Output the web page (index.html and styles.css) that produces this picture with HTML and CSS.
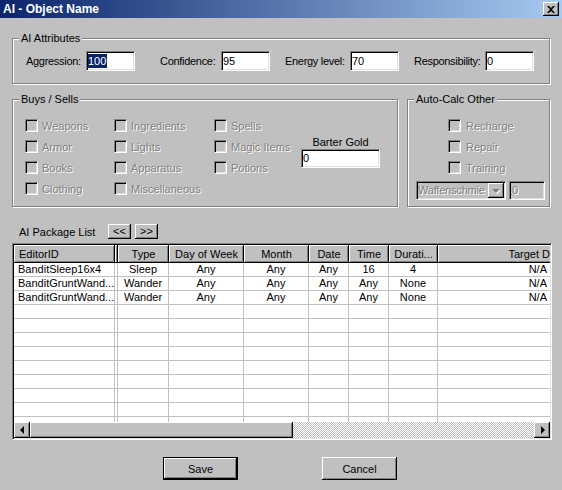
FILE: index.html
```html
<!DOCTYPE html>
<html lang="en">
<head>
  <meta charset="UTF-8" />
  <title>AI - Object Name</title>
  <link rel="stylesheet" href="styles.css">
</head>
<body>
  <div class="window">
    <div class="titlebar">
      <span class="title">AI - Object Name</span>
      <button class="close-btn">
        <svg width="8" height="7" viewBox="0 0 8 7"><path d="M0 0h2l2 2 2-2h2L5 3.5 8 7H6L4 5 2 7H0l3-3.5z" fill="#000"/></svg>
      </button>
    </div>

    <div class="content">
      <fieldset class="group attrs">
        <legend>AI Attributes</legend>
        <div class="attr-row">
          <span class="attr-label aggr">Aggression:</span>
          <div class="edit"><span class="sel">100</span></div>
          <span class="attr-label conf">Confidence:</span>
          <div class="edit">95</div>
          <span class="attr-label energy">Energy level:</span>
          <div class="edit">70</div>
          <span class="attr-label resp">Responsibility:</span>
          <div class="edit">0</div>
        </div>
      </fieldset>

      <div class="mid-row">
        <fieldset class="group buys">
          <legend>Buys / Sells</legend>
          <div class="checks">
            <div class="barter">
              <span class="barter-label">Barter Gold</span>
              <div class="edit barter-edit">0</div>
            </div>
            <div class="check"><span class="box"></span><span class="dis">Weapons</span></div>
            <div class="check"><span class="box"></span><span class="dis">Armor</span></div>
            <div class="check"><span class="box"></span><span class="dis">Books</span></div>
            <div class="check"><span class="box"></span><span class="dis">Clothing</span></div>
            <div class="check"><span class="box"></span><span class="dis">Ingredients</span></div>
            <div class="check"><span class="box"></span><span class="dis">Lights</span></div>
            <div class="check"><span class="box"></span><span class="dis">Apparatus</span></div>
            <div class="check"><span class="box"></span><span class="dis">Miscellaneous</span></div>
            <div class="check"><span class="box"></span><span class="dis">Spells</span></div>
            <div class="check"><span class="box"></span><span class="dis">Magic Items</span></div>
            <div class="check"><span class="box"></span><span class="dis">Potions</span></div>
          </div>
        </fieldset>

        <fieldset class="group auto">
          <legend>Auto-Calc Other</legend>
          <div class="auto-checks">
            <div class="check"><span class="box"></span><span class="dis">Recharge</span></div>
            <div class="check"><span class="box"></span><span class="dis">Repair</span></div>
            <div class="check"><span class="box"></span><span class="dis">Training</span></div>
          </div>
          <div class="combo-row">
            <div class="combo">
              <span class="combo-text dis">Waffenschmie</span>
              <span class="combo-btn"><span class="down-arrow"></span></span>
            </div>
            <div class="edit disabled-edit"><span class="dis">0</span></div>
          </div>
        </fieldset>
      </div>

      <div class="pkg-row">
        <span class="pkg-label">AI Package List</span>
        <button class="small-btn">&lt;&lt;</button>
        <button class="small-btn">&gt;&gt;</button>
      </div>

      <div class="list">
        <div class="list-body">
          <table class="grid">
            <thead>
              <tr>
                <th class="c-id">EditorID</th>
                <th class="c-gap"></th>
                <th class="c-type">Type</th>
                <th class="c-day">Day of Week</th>
                <th class="c-month">Month</th>
                <th class="c-date">Date</th>
                <th class="c-time">Time</th>
                <th class="c-dur">Durati...</th>
                <th class="c-target">Target D</th>
              </tr>
            </thead>
            <tbody>
              <tr><td class="c-id">BanditSleep16x4</td><td></td><td>Sleep</td><td>Any</td><td>Any</td><td>Any</td><td>16</td><td>4</td><td class="c-target">N/A</td></tr>
              <tr><td class="c-id">BanditGruntWand...</td><td></td><td>Wander</td><td>Any</td><td>Any</td><td>Any</td><td>Any</td><td>None</td><td class="c-target">N/A</td></tr>
              <tr><td class="c-id">BanditGruntWand...</td><td></td><td>Wander</td><td>Any</td><td>Any</td><td>Any</td><td>Any</td><td>None</td><td class="c-target">N/A</td></tr>
              <tr><td></td><td></td><td></td><td></td><td></td><td></td><td></td><td></td><td></td></tr>
              <tr><td></td><td></td><td></td><td></td><td></td><td></td><td></td><td></td><td></td></tr>
              <tr><td></td><td></td><td></td><td></td><td></td><td></td><td></td><td></td><td></td></tr>
              <tr><td></td><td></td><td></td><td></td><td></td><td></td><td></td><td></td><td></td></tr>
              <tr><td></td><td></td><td></td><td></td><td></td><td></td><td></td><td></td><td></td></tr>
              <tr><td></td><td></td><td></td><td></td><td></td><td></td><td></td><td></td><td></td></tr>
              <tr><td></td><td></td><td></td><td></td><td></td><td></td><td></td><td></td><td></td></tr>
              <tr><td></td><td></td><td></td><td></td><td></td><td></td><td></td><td></td><td></td></tr>
              <tr><td></td><td></td><td></td><td></td><td></td><td></td><td></td><td></td><td></td></tr>
            </tbody>
          </table>
        </div>
        <div class="hscroll">
          <span class="sb-btn"><span class="left-arrow"></span></span>
          <span class="sb-thumb"></span>
          <span class="sb-track"></span>
          <span class="sb-btn"><span class="right-arrow"></span></span>
        </div>
      </div>

      <div class="actions">
        <button class="btn default">Save</button>
        <button class="btn cancel">Cancel</button>
      </div>
    </div>
  </div>
</body>
</html>
```

FILE: styles.css
```css
body {
  margin: 0;
  background: #c0c0c0;
  font-family: "Liberation Sans", Arial, sans-serif;
  font-size: 11px;
  color: #000;
}
.window {
  width: 562px;
  height: 490px;
  overflow: hidden;
}
.titlebar {
  height: 18px;
  display: flex;
  align-items: center;
  justify-content: space-between;
  padding: 0 3px;
  background: linear-gradient(to right, #0a246a, #a6caf0);
}
.title {
  color: #fff;
  font-weight: bold;
  font-size: 12px;
}
.close-btn {
  width: 16px;
  height: 14px;
  padding: 0;
  border: none;
  background: #c0c0c0;
  box-shadow: inset -1px -1px #000, inset 1px 1px #fff, inset -2px -2px #808080;
  display: flex;
  align-items: center;
  justify-content: center;
}
.content {
  padding: 0 12px;
}

/* group boxes */
.group {
  margin: 0;
  padding: 0;
  min-width: 0;
  border: 1px solid #808080;
  box-shadow: inset 1px 1px #fff, 1px 1px #fff;
}
.group legend {
  margin-left: 6px;
  padding: 0 2px;
  line-height: 13px;
  background: #c0c0c0;
}
.attrs {
  margin-top: 14px;
}
.attr-row {
  display: flex;
  align-items: center;
  padding: 6px 0 12px 13px;
  letter-spacing: -0.3px;
}
.attr-label.aggr { width: 60px; }
.attr-label.conf { width: 61px; margin-left: 25px; }
.attr-label.energy { width: 65px; margin-left: 15px; }
.attr-label.resp { width: 71px; margin-left: 15px; }

.edit {
  box-sizing: border-box;
  width: 49px;
  height: 20px;
  padding-left: 1px;
  line-height: 18px;
  background: #fff;
  border: 1px solid;
  border-color: #808080 #fff #fff #808080;
  box-shadow: inset 1px 1px #000, inset -1px -1px #dfdfdf;
  white-space: nowrap;
  overflow: hidden;
  letter-spacing: 0;
}
.sel {
  display: inline-block;
  line-height: 14px;
  padding-right: 1px;
  background: #0a246a;
  color: #fff;
}

.mid-row {
  display: flex;
  gap: 9px;
  margin-top: 9px;
}
.buys {
  width: 386px;
  box-sizing: border-box;
}
.auto {
  flex: 1;
}
.checks {
  display: grid;
  grid-template-columns: 89px 100px 87px 79px;
  grid-template-rows: repeat(4, 21px);
  grid-auto-flow: column;
  padding: 9px 0 7px 12px;
}
.check {
  display: flex;
  align-items: center;
  gap: 4px;
}
.box {
  box-sizing: border-box;
  width: 13px;
  height: 13px;
  background: #c0c0c0;
  border: 1px solid;
  border-color: #808080 #fff #fff #808080;
  box-shadow: inset 1px 1px #000, inset -1px -1px #dfdfdf;
}
.dis {
  color: #808080;
  text-shadow: 1px 1px 0 #fff;
}
.barter {
  grid-column: 4;
  grid-row: 2 / span 2;
  display: flex;
  flex-direction: column;
}
.barter-label {
  text-align: center;
  line-height: 13px;
}
.edit.barter-edit {
  width: 79px;
  height: 19px;
  line-height: 17px;
}
.auto-checks {
  padding: 9px 0 0 40px;
}
.auto-checks .check {
  height: 21px;
  gap: 5px;
}
.combo-row {
  display: flex;
  margin: 3px 0 0 8px;
}
.combo {
  box-sizing: border-box;
  display: flex;
  width: 90px;
  height: 19px;
  padding: 1px;
  background: #c0c0c0;
  border: 1px solid;
  border-color: #808080 #fff #fff #808080;
  box-shadow: inset 1px 1px #000, inset -1px -1px #dfdfdf;
}
.combo-text {
  flex: 1;
  overflow: hidden;
  white-space: nowrap;
  line-height: 15px;
  letter-spacing: -0.2px;
}
.combo-btn {
  flex: none;
  width: 16px;
  height: 15px;
  background: #c0c0c0;
  box-shadow: inset -1px -1px #000, inset 1px 1px #fff, inset -2px -2px #808080;
  display: flex;
  align-items: center;
  justify-content: center;
}
.down-arrow {
  border-left: 4px solid transparent;
  border-right: 4px solid transparent;
  border-top: 4px solid #808080;
  filter: drop-shadow(1px 1px 0 #fff);
}
.edit.disabled-edit {
  width: 36px;
  height: 19px;
  line-height: 17px;
  margin-left: 3px;
  background: #c0c0c0;
  padding-left: 2px;
}

/* package list */
.pkg-row {
  display: flex;
  align-items: center;
  margin-top: 17px;
  padding-left: 7px;
}
.pkg-label {
  width: 89px;
}
.small-btn {
  width: 23px;
  height: 15px;
  padding: 0;
  margin-right: 4px;
  border: none;
  background: #c0c0c0;
  font: inherit;
  line-height: 13px;
  box-shadow: inset -1px -1px #000, inset 1px 1px #fff, inset -2px -2px #808080;
}
.list {
  box-sizing: border-box;
  width: 540px;
  height: 197px;
  margin-top: 4px;
  padding: 1px;
  display: flex;
  flex-direction: column;
  background: #fff;
  border: 1px solid;
  border-color: #808080 #fff #fff #808080;
  box-shadow: inset 1px 1px #000, inset -1px -1px #dfdfdf;
}
.list-body {
  flex: 1;
  overflow: hidden;
}
.grid {
  table-layout: fixed;
  border-collapse: separate;
  border-spacing: 0;
  width: 540px;
}
.grid th,
.grid td {
  box-sizing: border-box;
  padding: 0 2px;
  white-space: nowrap;
  overflow: hidden;
  text-align: center;
}
.grid th {
  height: 18px;
  font-weight: normal;
  background: #c0c0c0;
  box-shadow: inset -1px -1px #000, inset 1px 1px #fff, inset -2px -2px #808080;
}
.grid td {
  height: 14px;
  line-height: 13px;
  border-right: 1px solid #c0c0c0;
  border-bottom: 1px solid #c0c0c0;
}
.grid .c-id { width: 101px; text-align: left; padding-left: 4px; }
.grid th.c-id { padding-left: 5px; }
.grid .c-gap { width: 3px; padding: 0; }
.grid .c-type { width: 51px; }
.grid .c-day { width: 75px; }
.grid .c-month { width: 65px; }
.grid .c-date { width: 40px; }
.grid .c-time { width: 40px; }
.grid .c-dur { width: 49px; }
.grid .c-target { width: 116px; text-align: right; padding-right: 6px; }
.grid th.c-target { padding-right: 4px; }

.hscroll {
  flex: none;
  display: flex;
  height: 16px;
}
.sb-btn {
  width: 16px;
  height: 16px;
  background: #c0c0c0;
  box-shadow: inset -1px -1px #000, inset 1px 1px #fff, inset -2px -2px #808080;
  display: flex;
  align-items: center;
  justify-content: center;
}
.sb-thumb {
  width: 263px;
  background: #c0c0c0;
  box-shadow: inset -1px -1px #000, inset 1px 1px #fff, inset -2px -2px #808080;
}
.sb-track {
  flex: 1;
  background: repeating-conic-gradient(#fff 0 25%, #c0c0c0 0 50%) 0 0 / 2px 2px;
}
.left-arrow {
  border-top: 4px solid transparent;
  border-bottom: 4px solid transparent;
  border-right: 4px solid #000;
  margin-right: 1px;
}
.right-arrow {
  border-top: 4px solid transparent;
  border-bottom: 4px solid transparent;
  border-left: 4px solid #000;
  margin-left: 1px;
}

/* dialog buttons */
.actions {
  display: flex;
  margin-top: 17px;
  padding-left: 151px;
}
.btn {
  box-sizing: border-box;
  width: 75px;
  height: 23px;
  padding: 0;
  border: none;
  background: #c0c0c0;
  font: inherit;
  box-shadow: inset -1px -1px #000, inset 1px 1px #fff, inset -2px -2px #808080;
}
.btn.default {
  border: 1px solid #000;
}
.btn.cancel {
  margin-left: 84px;
}
```
